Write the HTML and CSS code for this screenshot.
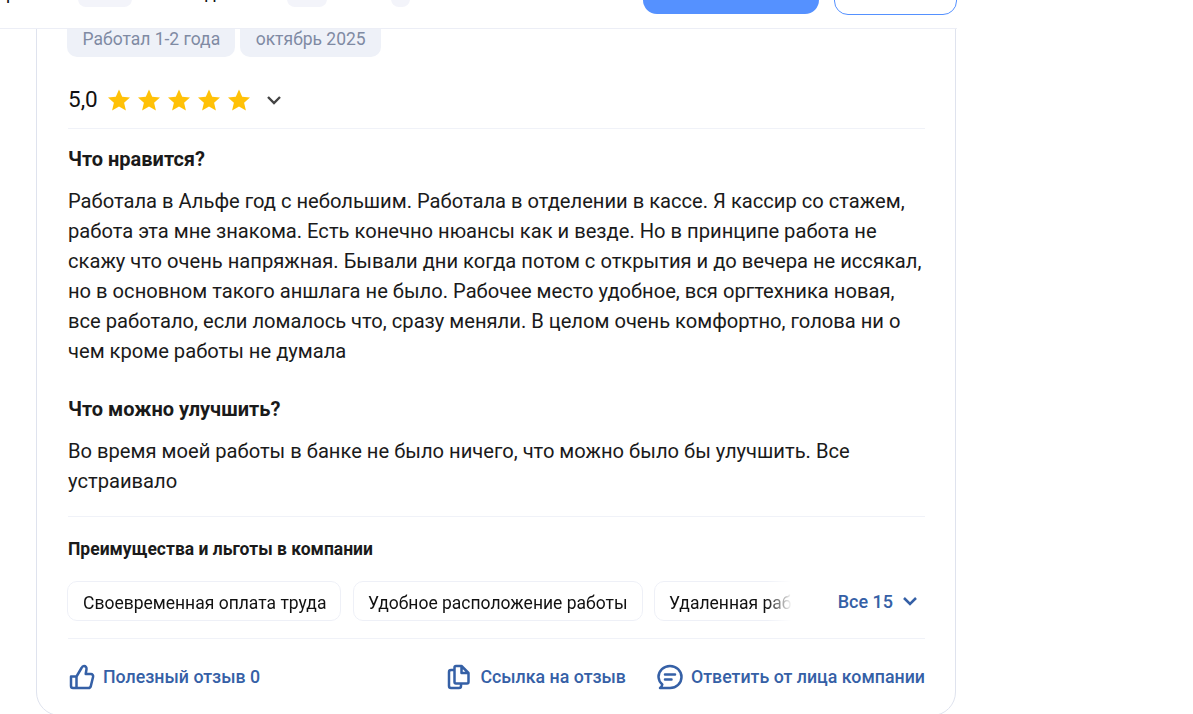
FILE: index.html
```html
<!DOCTYPE html>
<html lang="ru">
<head>
  <meta charset="UTF-8">
  <meta name="viewport" content="width=device-width, initial-scale=1.0">
  <title>Отзыв о работе</title>
  <link rel="stylesheet" href="styles.css">
</head>
<body>
  <header class="topbar">
    <div class="topbar-inner">
      <span class="topbar-word first">р</span>
      <span class="topbar-chip chip-a"></span>
      <span class="topbar-word second">д</span>
      <span class="topbar-chip chip-b"></span>
      <span class="topbar-chip chip-c"></span>
      <button class="btn-primary"></button>
      <button class="btn-outline"></button>
    </div>
  </header>

  <main class="review">
    <div class="tags">
      <span class="tag">Работал 1-2 года</span>
      <span class="tag">октябрь 2025</span>
    </div>

    <div class="rating">
      <span class="rating-value">5,0</span>
      <div class="stars">
        <svg class="star" viewBox="0 0 24 24"><path d="M12 1.5l3.2 7.2 7.8.8-5.9 5.2 1.8 7.8L12 18.400l-6.900 4.100 1.800-7.800L1 9.500l7.800-.8z"/></svg>
        <svg class="star" viewBox="0 0 24 24"><path d="M12 1.5l3.2 7.2 7.8.8-5.9 5.2 1.8 7.8L12 18.400l-6.900 4.100 1.800-7.800L1 9.500l7.800-.8z"/></svg>
        <svg class="star" viewBox="0 0 24 24"><path d="M12 1.5l3.2 7.2 7.8.8-5.9 5.2 1.8 7.8L12 18.400l-6.900 4.100 1.800-7.800L1 9.500l7.800-.8z"/></svg>
        <svg class="star" viewBox="0 0 24 24"><path d="M12 1.5l3.2 7.2 7.8.8-5.9 5.2 1.8 7.8L12 18.400l-6.900 4.100 1.800-7.800L1 9.500l7.800-.8z"/></svg>
        <svg class="star" viewBox="0 0 24 24"><path d="M12 1.5l3.2 7.2 7.8.8-5.9 5.2 1.8 7.8L12 18.400l-6.900 4.100 1.800-7.800L1 9.500l7.800-.8z"/></svg>
      </div>
      <svg class="rating-arrow" viewBox="0 0 16 16"><path d="M2 5l6 6 6-6"/></svg>
    </div>

    <section class="block">
      <h3 class="block-title">Что нравится?</h3>
      <p class="block-text">Работала в Альфе год с небольшим. Работала в отделении в кассе. Я кассир со стажем, работа эта мне знакома. Есть конечно нюансы как и везде. Но в принципе работа не скажу что очень напряжная. Бывали дни когда потом с открытия и до вечера не иссякал, но в основном такого аншлага не было. Рабочее место удобное, вся оргтехника новая, все работало, если ломалось что, сразу меняли. В целом очень комфортно, голова ни о чем кроме работы не думала</p>
    </section>

    <section class="block">
      <h3 class="block-title">Что можно улучшить?</h3>
      <p class="block-text">Во время моей работы в банке не было ничего, что можно было бы улучшить. Все устраивало</p>
    </section>

    <section class="benefits">
      <h4 class="benefits-title">Преимущества и льготы в компании</h4>
      <div class="benefits-row">
        <div class="benefits-list">
          <span class="benefit">Своевременная оплата труда</span>
          <span class="benefit">Удобное расположение работы</span>
          <span class="benefit">Удаленная работа</span>
        </div>
        <a class="benefits-all">Все 15
          <svg class="all-arrow" viewBox="0 0 16 16"><path d="M2 5l6 6 6-6"/></svg>
        </a>
      </div>
    </section>

    <footer class="actions">
      <a class="action action-useful">
        <svg class="action-icon" viewBox="0 0 26 26"><path d="M2 12.500h5.500V24H4a2 2 0 0 1-2-2zM7.500 12.500L12.500 4c.6-1.300 1.500-2 2.500-2 1.700 0 2.800 1.400 2.500 3.200L16.700 10H22a2.200 2.200 0 0 1 2.100 2.800l-2.300 9.300A2.500 2.500 0 0 1 19.400 24H7.500"/></svg>
        Полезный отзыв 0
      </a>
      <a class="action">
        <svg class="action-icon" viewBox="0 0 26 26"><path d="M8.500 6H5a2 2 0 0 0-2 2v14a2 2 0 0 0 2 2h8a2 2 0 0 0 2-2v-2.500M8.500 3.500A1.500 1.500 0 0 1 10 2h5.500l7 7v9a1.500 1.500 0 0 1-1.500 1.500H10A1.500 1.500 0 0 1 8.500 18zM15.500 2v7h7"/></svg>
        Ссылка на отзыв
      </a>
      <a class="action">
        <svg class="action-icon" viewBox="0 0 26 26"><path d="M13 2c6.300 0 11.500 4.800 11.500 11S19.300 24 13 24H3c1.500-1 2.200-2.200 2.300-3.500A10.800 10.800 0 0 1 1.500 13C1.500 6.800 6.700 2 13 2zM8 10.500h10M8 15.500h6.500"/></svg>
        Ответить от лица компании
      </a>
    </footer>
  </main>
</body>
</html>
```

FILE: styles.css
```css
* {
  box-sizing: border-box;
  margin: 0;
  padding: 0;
}

body {
  font-family: Roboto, sans-serif;
  background-color: #FFFFFF;
  color: #1A1A1A;
  height: 714px;
  overflow: hidden;
  padding-left: 36px;
}

/* Header */
.topbar {
  position: absolute;
  top: 0;
  left: 0;
  width: 957px;
  height: 29px;
  background-color: #FFFFFF;
  border-bottom: 1px solid #ECEEF6;
  overflow: hidden;
  z-index: 2;
}

.topbar-inner {
  position: relative;
  height: 100%;
}

.topbar-word {
  position: absolute;
  top: -18px;
  font-size: 18px;
  line-height: 21px;
  color: #111111;
}

.topbar-word.first { left: 6px; }
.topbar-word.second { left: 205px; }

.topbar-chip {
  position: absolute;
  top: -20px;
  height: 27px;
  background-color: #F3F4FA;
  border-radius: 8px;
}

.chip-a { left: 78px; width: 54px; }
.chip-b { left: 287px; width: 40px; }
.chip-c { left: 391px; width: 19px; }

.btn-primary {
  position: absolute;
  top: -30px;
  left: 643px;
  width: 176px;
  height: 44px;
  background-color: #5591FF;
  border: none;
  border-radius: 14px;
}

.btn-outline {
  position: absolute;
  top: -30px;
  left: 834px;
  width: 123px;
  height: 45px;
  background-color: #FFFFFF;
  border: 1px solid #5591FF;
  border-radius: 14px;
}

/* Review card */
.review {
  width: 920px;
  height: 736px;
  margin-top: -20px;
  padding: 37px 30px 0 31px;
  background-color: #FFFFFF;
  border: 1px solid #DFE3EE;
  border-radius: 24px;
}

.tags {
  display: flex;
  gap: 5px;
  margin-left: -1px;
}

.tag {
  padding: 11px 15px 7px 15.500px;
  font-size: 17.500px;
  line-height: 21px;
  color: #7F8AA3;
  background-color: #EEF1F8;
  border-radius: 10px;
}

/* Rating */
.rating {
  display: flex;
  align-items: center;
  height: 72px;
  padding-top: 14px;
  border-bottom: 1px solid #F0F2F8;
}

.rating-value {
  padding-bottom: 2px;
  font-size: 22.500px;
  color: #111111;
  margin-right: 9px;
}

.stars {
  display: flex;
  gap: 6px;
}

.star {
  width: 24px;
  height: 24px;
  fill: #FFC107;
}

.rating-arrow {
  width: 16px;
  height: 16px;
  margin-left: 15px;
  fill: none;
  stroke: #444444;
  stroke-width: 2.400;
}

/* Text blocks */
.block {
  margin-top: 18px;
}

.block + .block {
  margin-top: 31px;
}

.block-title {
  font-size: 20px;
  font-weight: 700;
  line-height: 24px;
  margin-bottom: 15px;
}

.block-text {
  font-size: 20.150px;
  line-height: 30px;
}

/* Benefits */
.benefits {
  margin-top: 20px;
  border-top: 1px solid #F0F2F8;
}

.benefits-title {
  margin-top: 22px;
  font-size: 17.500px;
  font-weight: 700;
  line-height: 20px;
}

.benefits-row {
  display: flex;
  align-items: center;
  justify-content: space-between;
  margin-top: 22px;
  padding-bottom: 17px;
  border-bottom: 1px solid #F0F2F8;
}

.benefits-list {
  display: flex;
  gap: 11.500px;
  width: 725px;
  margin-left: -1px;
  overflow: hidden;
  mask-image: linear-gradient(90deg, #000 700px, transparent 725px);
}

.benefit {
  flex-shrink: 0;
  padding: 11px 14px 7px 15px;
  font-size: 17.500px;
  line-height: 20px;
  color: #111111;
  background-color: #FFFFFF;
  border: 1px solid #EEF0F7;
  border-radius: 10px;
}

.benefit + .benefit {
  padding-left: 14px;
}

.benefits-all {
  display: flex;
  align-items: center;
  gap: 9px;
  padding-right: 7px;
  font-size: 18px;
  font-weight: 500;
  color: #3560A6;
}

.all-arrow {
  width: 16px;
  height: 16px;
  fill: none;
  stroke: #3560A6;
  stroke-width: 2.500;
}

/* Footer actions */
.actions {
  display: flex;
  align-items: center;
  gap: 31px;
  margin-top: 25px;
  padding-left: 1px;
}

.action {
  display: flex;
  align-items: center;
  gap: 8px;
  padding-bottom: 1px;
  font-size: 17.800px;
  font-weight: 500;
  color: #3560A6;
}

.action-useful {
  margin-right: auto;
}

.action-icon {
  width: 26px;
  height: 26px;
  margin-bottom: -1px;
  fill: none;
  stroke: #3560A6;
  stroke-width: 2.500;
  stroke-linejoin: round;
  stroke-linecap: round;
}
```
